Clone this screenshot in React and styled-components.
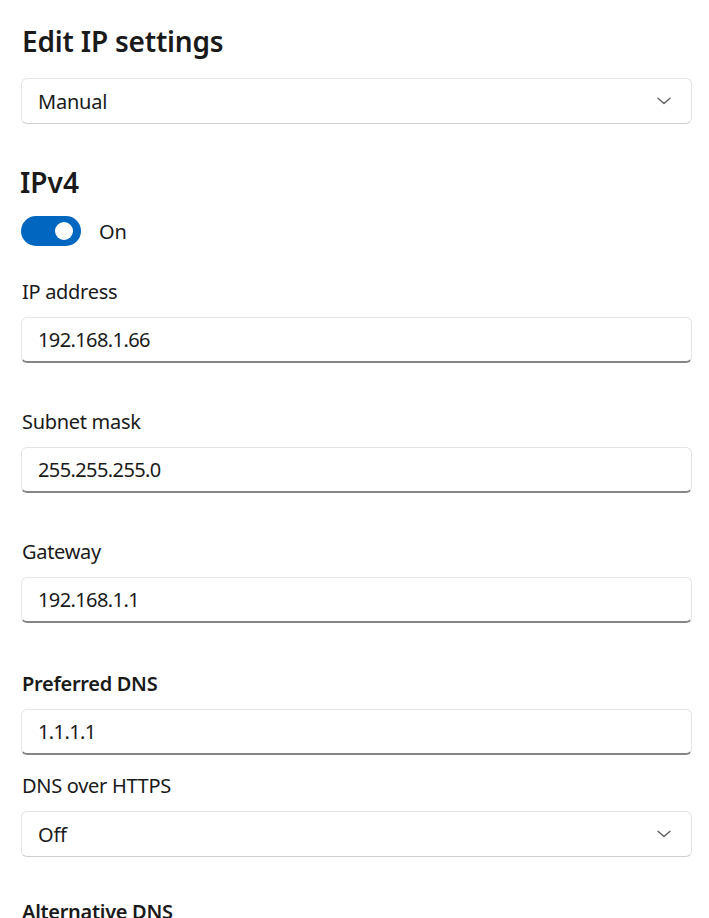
import { createGlobalStyle } from 'styled-components';
import styled from 'styled-components';

const GlobalStyle = createGlobalStyle`
  html, body {
    margin: 0;
    padding: 0;
    background: #ffffff;
  }

  body {
    font-family: 'Noto Sans', 'Open Sans', sans-serif;
    color: #1a1a1a;
    overflow: hidden;
  }
`;

const Page = styled.div`
  display: flex;
  flex-direction: column;
  padding: 23px 17px 0 21px;
  max-height: 918px;
  overflow: hidden;

  & > * {
    flex-shrink: 0;
  }
`;

const Title = styled.h1`
  margin: 0 0 19px 1px;
  font-size: 28px;
  line-height: 36px;
  font-weight: 600;
  letter-spacing: -0.2px;
`;

const SectionTitle = styled.h2`
  margin: 40px 0 16px -1px;
  font-size: 28px;
  line-height: 36px;
  font-weight: 600;
`;

const Box = styled.div`
  display: flex;
  align-items: center;
  justify-content: space-between;
  height: 46px;
  box-sizing: border-box;
  padding: 0 20px 0 16px;
  background: #ffffff;
  border: 1px solid #e5e5e5;
  border-bottom: ${(p) => (p.$input ? '2px solid #868686' : '1px solid #cfcfcf')};
  border-radius: 6px;
  font-size: 20px;
  letter-spacing: ${(p) => (p.$input ? '-0.6px' : '-0.2px')};
`;

const ToggleRow = styled.div`
  display: flex;
  align-items: center;
  gap: 18px;
  font-size: 20px;
`;

const Track = styled.div`
  width: 60px;
  height: 30px;
  border-radius: 15px;
  background: #0067c0;
  position: relative;
  flex-shrink: 0;
`;

const Knob = styled.span`
  position: absolute;
  top: 6px;
  right: 8px;
  width: 18px;
  height: 18px;
  border-radius: 50%;
  background: #ffffff;
`;

const Label = styled.div`
  margin: ${(p) => p.$top}px 0 11px 1px;
  font-size: 20px;
  line-height: 28px;
  letter-spacing: -0.3px;
  font-weight: ${(p) => (p.$bold ? 600 : 400)};
`;

const Chevron = () => (
  <svg width="14" height="8" viewBox="0 0 14 8" fill="none">
    <path d="M1 1.2 L7 6.6 L13 1.2" stroke="#5d5d5d" strokeWidth="1.3" strokeLinecap="round" strokeLinejoin="round" />
  </svg>
);

const fields = [
  { label: 'IP address', value: '192.168.1.66', top: 32 },
  { label: 'Subnet mask', value: '255.255.255.0', top: 45 },
  { label: 'Gateway', value: '192.168.1.1', top: 45 },
];

export default function App() {
  return (
    <>
      <GlobalStyle />
      <Page>
        <Title>Edit IP settings</Title>
        <Box>
          <span>Manual</span>
          <Chevron />
        </Box>

        <SectionTitle>IPv4</SectionTitle>
        <ToggleRow>
          <Track>
            <Knob />
          </Track>
          <span>On</span>
        </ToggleRow>

        {fields.map((f) => (
          <div key={f.label}>
            <Label $top={f.top}>{f.label}</Label>
            <Box $input>
              <span>{f.value}</span>
            </Box>
          </div>
        ))}

        <Label $top={47} $bold>Preferred DNS</Label>
        <Box $input>
          <span>1.1.1.1</span>
        </Box>

        <Label $top={17}>DNS over HTTPS</Label>
        <Box>
          <span>Off</span>
          <Chevron />
        </Box>

        <Label $top={41} $bold>Alternative DNS</Label>
      </Page>
    </>
  );
}
